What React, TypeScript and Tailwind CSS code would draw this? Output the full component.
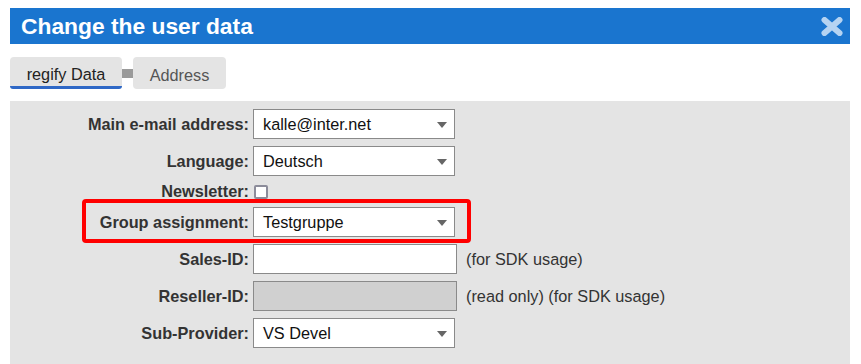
import React from "react";

const font = { fontFamily: '"Liberation Sans", Arial, sans-serif' };

function Arrow() {
  return (
    <svg width="10" height="6" viewBox="0 0 10 6" className="absolute right-[7px] top-[12px]">
      <polygon points="0,0 10,0 5,6" fill="#666" />
    </svg>
  );
}

function Select({ value }: { value: string }) {
  return (
    <div className="relative h-[30px] w-[202px] border border-[#8a8a8a] bg-white pl-[9px] text-[16.3px] leading-[28px] text-[#111]">
      {value}
      <Arrow />
    </div>
  );
}

function Label({ children }: { children: React.ReactNode }) {
  return (
    <div className="w-[243px] shrink-0 pr-[4px] text-right text-[16.3px] font-bold text-[#333]">{children}</div>
  );
}

export default function App() {
  return (
    <div className="h-[364px] w-[861px] overflow-hidden bg-white px-[10px] pt-[8px]" style={font}>
      <div className="flex h-[36px] w-[840px] items-center justify-between bg-[#1a75cf] pl-[11px] pr-[7px]">
        <div className="text-[22.8px] font-bold text-white">Change the user data</div>
        <svg width="22" height="19" viewBox="0 0 22 19">
          <path d="M3.5 3 L18.5 16 M18.5 3 L3.5 16" stroke="#b5d3f2" strokeWidth="6" strokeLinecap="round" />
        </svg>
      </div>
      <div className="mt-[13px] flex h-[32px] items-center">
        <div className="flex h-[32px] w-[112px] items-center justify-center rounded-t-[4px] rounded-b-[3px] border-b-[3px] border-[#2f68c6] bg-[#e4e4e4] pt-[5px] text-[16.3px] text-[#222]">
          regify Data
        </div>
        <div className="h-[9px] w-[11px] bg-[#9a9a9a]" />
        <div className="flex h-[32px] w-[93px] items-center justify-center rounded-[4px] bg-[#e4e4e4] pt-[4px] text-[16.3px] text-[#555]">
          Address
        </div>
      </div>
      <div className="mt-[12px] flex h-[300px] w-[840px] flex-col gap-[7px] bg-[#e4e4e4] pt-[8px]">
        <div className="flex items-center">
          <Label>Main e-mail address:</Label>
          <Select value="kalle@inter.net" />
        </div>
        <div className="flex items-center">
          <Label>Language:</Label>
          <Select value="Deutsch" />
        </div>
        <div className="flex h-[17px] items-center">
          <Label>Newsletter:</Label>
          <div className="ml-[1px] h-[14px] w-[14px] rounded-[2px] border-2 border-[#8c8c9a] bg-white" />
        </div>
        <div className="relative flex items-center">
          <Label>Group assignment:</Label>
          <Select value="Testgruppe" />
          <div className="pointer-events-none absolute left-[72px] top-[-8px] h-[44px] w-[389px] rounded-[4px] border-[4px] border-[#ff0000]" />
        </div>
        <div className="flex items-center">
          <Label>Sales-ID:</Label>
          <div className="h-[30px] w-[204px] border border-[#8a8a8a] bg-white" />
          <div className="ml-[9px] text-[16.3px] text-[#333]">(for SDK usage)</div>
        </div>
        <div className="flex items-center">
          <Label>Reseller-ID:</Label>
          <div className="h-[30px] w-[204px] border border-[#8a8a8a] bg-[#d0d0d0]" />
          <div className="ml-[9px] text-[16.3px] text-[#333]">(read only) (for SDK usage)</div>
        </div>
        <div className="flex items-center">
          <Label>Sub-Provider:</Label>
          <Select value="VS Devel" />
        </div>
      </div>
    </div>
  );
}
